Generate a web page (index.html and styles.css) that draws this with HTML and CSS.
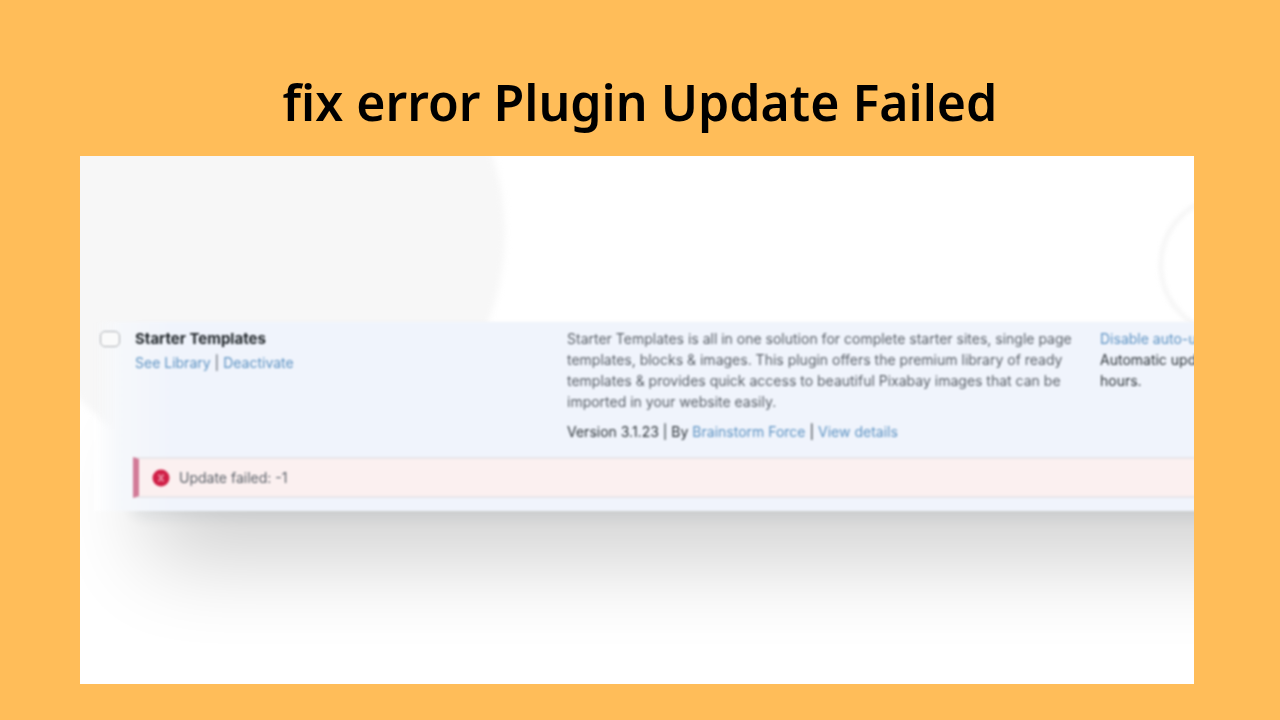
FILE: index.html
```html
<!DOCTYPE html>
<html lang="en">
<head>
<meta charset="utf-8">
<meta name="viewport" content="width=device-width, initial-scale=1">
<title>fix error Plugin Update Failed</title>
<link rel="stylesheet" href="styles.css">
</head>
<body>
<main class="slide">
  <h1 class="title">fix error Plugin Update Failed</h1>
  <section class="picture">
    <div class="scene">
      <span class="disc"></span>
      <span class="ring"></span>
      <div class="card">
        <table class="plugins">
          <tbody>
            <tr>
              <td class="check"><input type="checkbox" id="starter" class="box"></td>
              <td class="plugin">
                <label for="starter" class="name">Starter Templates</label>
                <div class="actions"><a href="#">See Library</a> | <a href="#">Deactivate</a></div>
              </td>
              <td class="description">
                <p>Starter Templates is all in one solution for complete starter sites, single page<br>templates, blocks &amp; images. This plugin offers the premium library of ready<br>templates &amp; provides quick access to beautiful Pixabay images that can be<br>imported in your website easily.</p>
                <p class="meta">Version 3.1.23 | By <a href="#">Brainstorm Force</a> | <a href="#">View details</a></p>
              </td>
              <td class="updates">
                <a href="#">Disable auto-updates</a><br>Automatic update in 8<br>hours.
              </td>
            </tr>
          </tbody>
        </table>
        <div class="notice" role="alert">
          <svg class="fail" viewBox="0 0 18 18" aria-hidden="true">
            <circle cx="9" cy="9" r="8.5" fill="#d01f46"/>
            <path d="M6.5 5.5l5 7M11.5 5.5l-5 7" stroke="#e8899f" stroke-width="2"/>
          </svg>
          <span>Update failed: -1</span>
        </div>
      </div>
    </div>
  </section>
</main>
</body>
</html>
```
FILE: styles.css
```css
* {
  box-sizing: border-box;
}

body {
  margin: 0;
  background: #ffbd59;
}

.slide {
  display: flex;
  flex-direction: column;
  min-height: 100vh;
  padding: 66px 86px 36px 80px;
}

.title {
  margin: 0 0 18px;
  padding-left: 6px;
  color: #000;
  font: 600 50px/72px "Noto Sans", sans-serif;
  text-align: center;
}

.picture {
  flex: 1;
  overflow: hidden;
  background: #fff;
}

.scene {
  position: relative;
  min-height: 528px;
  padding: 166px 0 172px 14px;
}

.disc {
  position: absolute;
  top: -168px;
  left: -65px;
  width: 490px;
  height: 490px;
  border-radius: 50%;
  background: #f7f7f7;
  filter: blur(3px);
}

.ring {
  position: absolute;
  top: 38px;
  right: -107px;
  width: 142px;
  height: 142px;
  border: 4px solid #f4f4f4;
  border-radius: 50%;
  filter: blur(2px);
}

.card {
  position: relative;
  width: 1400px;
  padding: 0 0 13px 8px;
  background: linear-gradient(90deg, rgba(247, 249, 251, 0), #f6f8fb 24px, #f0f4fc 80px);
  box-shadow: 16px 88px 88px -40px rgba(0, 0, 0, 0.19), 36px 8px 16px -4px rgba(60, 85, 100, 0.12);
  color: #5a6068;
  font: 14px/21px Inter, sans-serif;
  filter: blur(1px);
}

.plugins {
  width: 100%;
  border-collapse: collapse;
  table-layout: fixed;
}

.plugins td {
  padding: 6px 0 15px;
  vertical-align: top;
}

.plugins .check {
  width: 33px;
}

.plugins .plugin {
  width: 432px;
}

.plugins .description {
  width: 533px;
  white-space: nowrap;
}

.box {
  display: block;
  appearance: none;
  width: 20px;
  height: 16px;
  margin: 3px 0 0 -2px;
  border: 1px solid #a8abb0;
  border-radius: 5px;
  background: #fafafa;
}

.name {
  color: #1d2327;
  font-size: 15px;
  font-weight: 700;
}

.actions {
  margin-top: 3px;
}

a {
  color: #5c92c2;
  text-decoration: none;
}

p {
  margin: 0;
}

.meta {
  margin-top: 9px;
}

.meta,
.updates {
  color: #2c3338;
}

.notice {
  display: flex;
  align-items: center;
  gap: 9px;
  height: 41px;
  margin-left: 31px;
  padding-left: 13px;
  border: 2px solid #e8e6ea;
  border-left: 6px solid #d27b98;
  background: #fbf0f0;
}

.fail {
  width: 18px;
  height: 18px;
}
```
